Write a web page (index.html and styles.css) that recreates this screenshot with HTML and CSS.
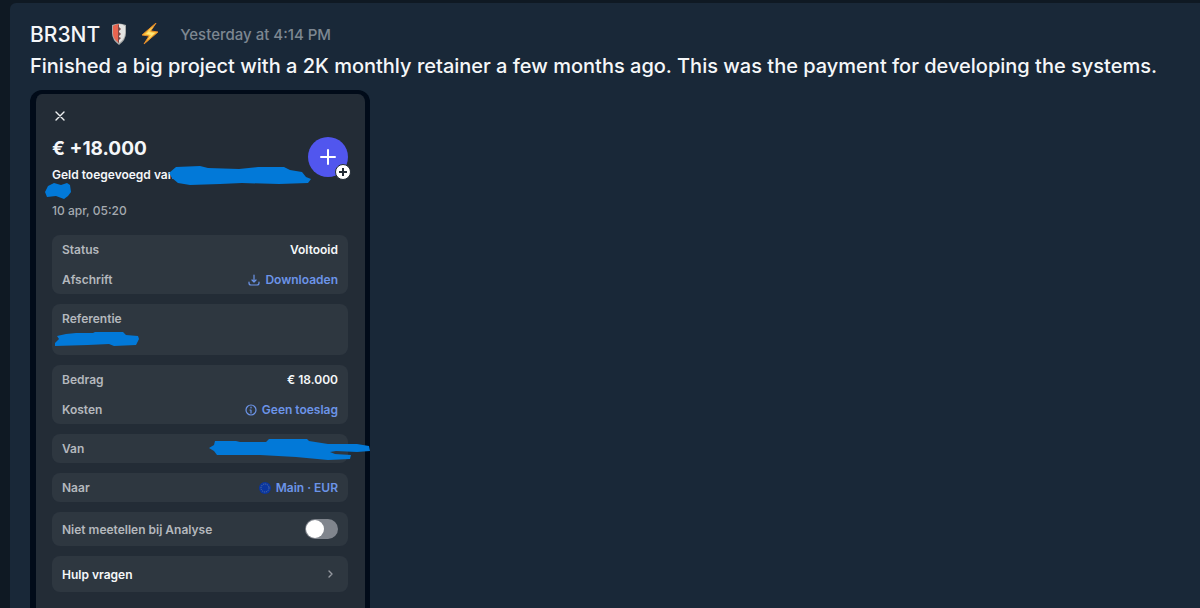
FILE: index.html
```html
<!DOCTYPE html>
<html lang="en">
<head>
    <meta charset="UTF-8">
    <meta name="viewport" content="width=device-width, initial-scale=1.0">
    <title>Chat message</title>
    <link rel="stylesheet" href="styles.css">
</head>
<body>
    <main class="panel">
        <article class="message">
            <header class="message-header">
                <span class="author">BR3NT</span>
                <svg class="shield" viewBox="0 0 16 22" role="img" aria-label="Shield">
                    <path d="M1 2Q8-1 15 2V10Q15 17 8 22Q1 17 1 10Z" fill="#a9aaa9"/>
                    <path d="M2 3Q5 1 8 1V20Q2 16 2 10Z" fill="#e8644f"/>
                    <path d="M8 1Q11 1 14 3V10Q14 16 8 20Z" fill="#e4e4e2"/>
                    <path d="M7 2H8V20L7 19ZM8 4L10 6L8 8ZM8 9L10 11L8 13ZM8 14L10 15L8 17Z" fill="#7c4846"/>
                </svg>
                <svg class="bolt" viewBox="0 0 18 22" role="img" aria-label="Lightning">
                    <path d="M15 0L1 12L8 13L3 21L17 9L10 8Z" fill="#f9c23c" stroke="#e58a28" stroke-width="1" stroke-linejoin="round"/>
                    <path d="M13 3L5 11L10 12L7 16L14 10L8 9Z" fill="#ffe678"/>
                </svg>
                <time class="time">Yesterday at 4:14 PM</time>
            </header>
            <p class="text">Finished a big project with a 2K monthly retainer a few months ago. This was the payment for developing the systems.</p>

            <section class="phone" lang="nl">
                <button class="close" type="button" aria-label="Sluiten">
                    <svg viewBox="0 0 10 10"><path d="M1 1L9 9M9 1L1 9"/></svg>
                </button>
                <div class="summary">
                    <div class="summary-text">
                        <h1 class="amount">€ +18.000</h1>
                        <p class="description">Geld toegevoegd van</p>
                        <p class="date">10 apr, 05:20</p>
                        <svg class="scribble scribble-name" viewBox="0 0 268 36" aria-hidden="true">
                            <path d="M125 8L132 2L156 1L164 3L195 4L214 2L240 2L246 5L258 7L262 12L267 14L264 18L235 19L198 18L176 19L146 20L134 18L128 13Z"/>
                            <path d="M1 27L4 21L10 18L17 20L23 18L26 20L27 27L24 31L20 34L12 31L3 32Z"/>
                        </svg>
                    </div>
                    <div class="avatar">
                        <svg class="avatar-plus" viewBox="0 0 16 16"><path d="M8 1V15M1 8H15"/></svg>
                        <span class="badge">
                            <svg viewBox="0 0 8 8"><path d="M4 0V8M0 4H8"/></svg>
                        </span>
                    </div>
                </div>

                <div class="cards">
                    <dl class="card">
                        <div class="row">
                            <dt>Status</dt>
                            <dd>Voltooid</dd>
                        </div>
                        <div class="row">
                            <dt>Afschrift</dt>
                            <dd>
                                <a class="link" href="#">
                                    <svg class="icon" viewBox="0 0 12 12"><path d="M6 1V8M4 6L6 8L8 6M1 8V9Q1 11 3 11H9Q11 11 11 9V8"/></svg>
                                    Downloaden
                                </a>
                            </dd>
                        </div>
                    </dl>

                    <dl class="card reference">
                        <div class="row">
                            <dt>Referentie</dt>
                            <dd></dd>
                        </div>
                        <svg class="scribble scribble-reference" viewBox="0 0 86 16" aria-hidden="true">
                            <path d="M1 12L5 8L3 5L12 3L22 2L39 2L41 1L69 1L72 4L84 5L85 8L82 14L60 15L55 13L34 14L1 15Z"/>
                        </svg>
                    </dl>

                    <dl class="card">
                        <div class="row">
                            <dt>Bedrag</dt>
                            <dd>€ 18.000</dd>
                        </div>
                        <div class="row">
                            <dt>Kosten</dt>
                            <dd>
                                <a class="link" href="#">
                                    <svg class="icon" viewBox="0 0 12 12"><circle cx="6" cy="6" r="5"/><path d="M6 3V4M5 6H6V9"/></svg>
                                    Geen toeslag
                                </a>
                            </dd>
                        </div>
                    </dl>

                    <dl class="card">
                        <div class="row">
                            <dt>Van</dt>
                            <dd></dd>
                        </div>
                        <svg class="scribble scribble-sender" viewBox="0 0 162 24" aria-hidden="true">
                            <path d="M1 10L6 7L7 3L28 3L32 4L58 4L61 1L99 1L101 3L120 6L149 6L161 8L162 13L149 14L128 13L122 14L127 16L143 17L142 21L120 22L88 19L52 17L9 17L6 13Z"/>
                        </svg>
                    </dl>

                    <dl class="card">
                        <div class="row">
                            <dt>Naar</dt>
                            <dd>
                                <a class="link" href="#">
                                    <svg class="flag" viewBox="0 0 12 12"><circle cx="6" cy="6" r="6"/><circle class="stars" cx="6" cy="6" r="4"/></svg>
                                    Main · EUR
                                </a>
                            </dd>
                        </div>
                    </dl>

                    <div class="card">
                        <div class="row row-switch">
                            <label for="analyse">Niet meetellen bij Analyse</label>
                            <input class="switch" type="checkbox" role="switch" id="analyse">
                        </div>
                    </div>

                    <button class="card help" type="button">
                        Hulp vragen
                        <svg class="chevron" viewBox="0 0 6 10"><path d="M1 2L4 5L1 8"/></svg>
                    </button>
                </div>
            </section>
        </article>
    </main>
</body>
</html>
```
FILE: styles.css
```css
* {
    box-sizing: border-box;
}
body {
    margin: 0;
    height: 100vh;
    padding: 3px 0 0 10px;
    overflow: hidden;
    background-color: #0f1923;
    color: #f5f7f9;
    font-family: Inter, "Liberation Sans", sans-serif;
}
h1, p, dl, dd {
    margin: 0;
}
svg {
    display: block;
    fill: none;
    stroke-linecap: round;
    stroke-linejoin: round;
}
button {
    border: none;
    padding: 0;
    color: inherit;
    font-family: inherit;
    cursor: pointer;
}
.panel {
    min-height: 100%;
    padding: 17px 20px 0;
    border-top-left-radius: 6px;
    background-color: #192838;
}
.message-header {
    display: flex;
    align-items: center;
    height: 28px;
}
.author {
    font-size: 21px;
    font-weight: 500;
}
.shield {
    width: 16px;
    height: 22px;
    margin-left: 11px;
}
.bolt {
    width: 18px;
    height: 22px;
    margin-left: 14px;
}
.time {
    margin-left: 21px;
    color: #7d8791;
    font-size: 15px;
    font-weight: 500;
}
.text {
    margin: 4px 0 10px;
    font-size: 20px;
    font-weight: 500;
    line-height: 28px;
}

/* payment screen */
.phone {
    width: 340px;
    padding: 16px 17px 40px 16px;
    border: solid #010b19;
    border-width: 4px 5px 0 6px;
    border-radius: 12px 12px 0 0;
    background-color: #232c36;
    font-size: 12px;
    font-weight: 600;
}
.close {
    display: block;
    padding: 1px 3px;
    background: none;
}
.close svg {
    width: 10px;
    height: 10px;
    stroke: #eef0f2;
    stroke-width: 1.4;
}
.summary {
    display: flex;
    justify-content: space-between;
    margin: 15px 0 14px;
}
.summary-text {
    position: relative;
}
.amount {
    font-size: 19px;
    line-height: 24px;
    font-weight: 700;
}
.description {
    margin-top: 4px;
    line-height: 20px;
}
.date {
    margin-top: 16px;
    color: #a5aab0;
    line-height: 20px;
    font-weight: 500;
}
.scribble {
    position: absolute;
    fill: #0279d8;
}
.scribble-name {
    top: 28px;
    left: -8px;
    width: 268px;
    height: 36px;
}
.avatar {
    position: relative;
    display: flex;
    align-items: center;
    justify-content: center;
    width: 40px;
    height: 40px;
    border-radius: 50%;
    background-color: #5156ee;
}
.avatar-plus {
    width: 16px;
    height: 16px;
    stroke: #ffffff;
    stroke-width: 2;
}
.badge {
    position: absolute;
    right: -3px;
    bottom: -3px;
    display: flex;
    align-items: center;
    justify-content: center;
    width: 16px;
    height: 16px;
    border: 1px solid #232c36;
    border-radius: 50%;
    background-color: #ffffff;
}
.badge svg {
    width: 8px;
    height: 8px;
    stroke: #232c36;
    stroke-width: 2;
}
.cards {
    display: flex;
    flex-direction: column;
    gap: 10px;
}
.card {
    position: relative;
    display: flex;
    flex-direction: column;
    gap: 1px;
    padding: 0 10px;
    border-radius: 8px;
    background-color: #2e3740;
}
.row {
    display: flex;
    align-items: center;
    justify-content: space-between;
    height: 29px;
}
.row dt, .row label {
    color: #b4b8bd;
}
.reference {
    padding-bottom: 22px;
}
.scribble-reference {
    top: 27px;
    left: 2px;
    width: 86px;
    height: 16px;
}
.scribble-sender {
    top: 4px;
    right: -22px;
    width: 162px;
    height: 24px;
}
.link {
    display: flex;
    align-items: center;
    gap: 5px;
    color: #6c94e8;
    text-decoration: none;
}
.icon {
    width: 12px;
    height: 12px;
    stroke: #6c94e8;
    stroke-width: 1.2;
}
.flag {
    width: 12px;
    height: 12px;
    fill: #0b369f;
}
.stars {
    stroke: #5470a0;
    stroke-dasharray: 0.5 1.6;
}
.row-switch {
    height: 34px;
}
.switch {
    appearance: none;
    display: flex;
    align-items: center;
    width: 33px;
    height: 20px;
    margin: 0;
    padding: 1px;
    border-radius: 10px;
    background-color: #80858d;
    cursor: pointer;
}
.switch::before {
    content: "";
    width: 18px;
    height: 18px;
    border-radius: 50%;
    background-color: #ffffff;
}
.switch:checked {
    justify-content: flex-end;
    background-color: #5156ee;
}
.help {
    flex-direction: row;
    align-items: center;
    justify-content: space-between;
    height: 36px;
    padding-right: 14px;
    font-size: 12px;
    font-weight: 600;
}
.chevron {
    width: 6px;
    height: 10px;
    stroke: #9599a0;
    stroke-width: 1.4;
}
```
